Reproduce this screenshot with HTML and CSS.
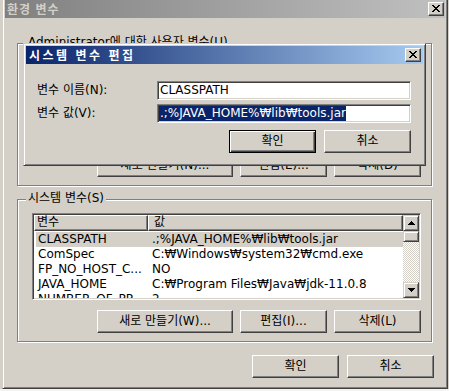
FILE: index.html
```html
<!DOCTYPE html>
<html lang="ko">
<head>
<meta charset="utf-8">
<title>환경 변수</title>
<link rel="stylesheet" href="styles.css">
</head>
<body>
<div class="win">
  <div class="caption inactive">
    <span class="cap-text cap-outer">환경 변수</span>
    <span class="cap-btn"><svg width="8" height="7" viewBox="0 0 8 7" shape-rendering="crispEdges"><path d="M0 0h2v1H0zM6 0h2v1H6zM1 1h2v1H1zM5 1h2v1H5zM2 2h4v1H2zM3 3h2v1H3zM2 4h4v1H2zM1 5h2v1H1zM5 5h2v1H5zM0 6h2v1H0zM6 6h2v1H6z"/></svg></span>
  </div>

  <div class="group">
    <span class="legend">Administrator에 대한 사용자 변수(U)</span>
    <div class="list">
      <div class="list-main"></div>
    </div>
    <div class="btn-row">
      <button class="btn btn-wide">새로 만들기(N)...</button>
      <button class="btn">편집(E)...</button>
      <button class="btn">삭제(D)</button>
    </div>
  </div>

  <div class="group group-sys">
    <span class="legend">시스템 변수(S)</span>
    <div class="list">
      <div class="list-main">
        <div class="list-head"><span class="hcell c1">변수</span><span class="hcell c2">값</span></div>
        <div class="rows">
          <div class="row sel"><span class="c1">CLASSPATH</span><span class="c2">.;%JAVA_HOME%₩lib₩tools.jar</span></div>
          <div class="row"><span class="c1">ComSpec</span><span class="c2">C:₩Windows₩system32₩cmd.exe</span></div>
          <div class="row"><span class="c1">FP_NO_HOST_C...</span><span class="c2">NO</span></div>
          <div class="row"><span class="c1">JAVA_HOME</span><span class="c2">C:₩Program Files₩Java₩jdk-11.0.8</span></div>
          <div class="row"><span class="c1">NUMBER_OF_PR...</span><span class="c2">2</span></div>
        </div>
      </div>
      <div class="vscroll">
        <div class="sb-btn"><svg width="7" height="4" viewBox="0 0 7 4" shape-rendering="crispEdges"><path d="M3 0h1v1h1v1h1v1h1v1H0V3h1V2h1V1h1z"/></svg></div>
        <div class="sb-thumb"></div>
        <div class="sb-track"></div>
        <div class="sb-btn"><svg width="7" height="4" viewBox="0 0 7 4" shape-rendering="crispEdges"><path d="M0 0h7v1H6v1H5v1H4v1H3V3H2V2H1V1H0z"/></svg></div>
      </div>
    </div>
    <div class="btn-row">
      <button class="btn btn-wide">새로 만들기(W)...</button>
      <button class="btn">편집(I)...</button>
      <button class="btn">삭제(L)</button>
    </div>
  </div>

  <div class="footer">
    <button class="btn">확인</button>
    <button class="btn">취소</button>
  </div>
</div>

<div class="dlg">
  <div class="caption active">
    <span class="cap-text cap-inner">시스템 변수 편집</span>
    <span class="cap-btn"><svg width="8" height="7" viewBox="0 0 8 7" shape-rendering="crispEdges"><path d="M0 0h2v1H0zM6 0h2v1H6zM1 1h2v1H1zM5 1h2v1H5zM2 2h4v1H2zM3 3h2v1H3zM2 4h4v1H2zM1 5h2v1H1zM5 5h2v1H5zM0 6h2v1H0zM6 6h2v1H6z"/></svg></span>
  </div>
  <div class="dlg-body">
    <div class="fields">
      <span class="flabel">변수 이름(N):</span>
      <div class="edit"><span>CLASSPATH</span></div>
      <span class="flabel">변수 값(V):</span>
      <div class="edit"><span class="selected">.;%JAVA_HOME%₩lib₩tools.jar</span></div>
    </div>
    <div class="dlg-buttons">
      <button class="btn default">확인</button>
      <button class="btn">취소</button>
    </div>
  </div>
</div>
</body>
</html>
```

FILE: styles.css
```css
* { box-sizing: border-box; }

html { background: #fff; }

body {
  margin: 0;
  width: 449px;
  height: 391px;
  overflow: hidden;
  display: flow-root;
  background: linear-gradient(to bottom, #d4d0c8 389px, #f4f4f4 389px);
  font-family: "DejaVu Sans", "Noto Sans CJK KR", sans-serif;
  font-size: 12px;
  color: #000;
}

/* ---------- outer window ---------- */
.win {
  width: 446px;
  height: 392px;
  margin: -3px 0 0 2px;
  border: 1px solid;
  border-color: #d4d0c8 #404040 #404040 #d4d0c8;
  box-shadow: inset 1px 1px #fff, inset -1px -1px #808080;
  padding: 2px;
  background: #d4d0c8;
  display: flex;
  flex-direction: column;
}

.caption {
  height: 18px;
  flex: none;
  display: flex;
  align-items: center;
  padding: 0 2px 0 2px;
}
.caption.inactive {
  background: linear-gradient(to right, #808080, #c0c0c0);
  color: #d4d0c8;
  padding-right: 1px;
}
.caption.active {
  background: linear-gradient(to right, #0a246a, #a6caf0);
  color: #fff;
  padding-left: 3px;
}
.cap-text {
  flex: 1;
  font-family: "Noto Sans CJK KR", sans-serif;
  font-weight: bold;
  font-size: 12px;
  line-height: 16px;
  white-space: nowrap;
}
.cap-outer { letter-spacing: 1px; }
.cap-inner { letter-spacing: 2.5px; }

.cap-btn {
  width: 16px;
  height: 14px;
  flex: none;
  background: #d4d0c8;
  border: 1px solid;
  border-color: #fff #404040 #404040 #fff;
  box-shadow: inset -1px -1px #808080;
  display: flex;
  justify-content: center;
  align-items: flex-start;
  padding-top: 2px;
}
.cap-btn svg { display: block; fill: #000; }

/* ---------- group boxes ---------- */
.group {
  flex: none;
  width: 415px;
  height: 143px;
  margin: 25px 0 0 12px;
  border: 1px solid #808080;
  box-shadow: inset 1px 1px #fff, 1px 1px #fff;
  display: flex;
  flex-direction: column;
}
.group-sys { margin-top: 13px; }

.legend {
  align-self: flex-start;
  margin: -9px 0 0 8px;
  padding: 0 2px;
  line-height: 15px;
  height: 15px;
  background: #d4d0c8;
  white-space: nowrap;
}

/* ---------- list view ---------- */
.list {
  flex: none;
  width: 389px;
  height: 87px;
  margin: 7px 0 0 14px;
  border: 1px solid;
  border-color: #808080 #fff #fff #808080;
  box-shadow: inset 1px 1px #404040, inset -1px -1px #d4d0c8;
  padding: 1px;
  background: #fff;
  display: flex;
  overflow: hidden;
}
.list-main {
  flex: 1;
  min-width: 0;
  overflow: hidden;
  display: flex;
  flex-direction: column;
}
.list-head {
  flex: none;
  height: 16px;
  display: flex;
}
.hcell {
  height: 16px;
  background: #d4d0c8;
  border: 1px solid;
  border-color: #fff #404040 #404040 #fff;
  box-shadow: inset -1px -1px #808080;
  line-height: 13px;
  padding-left: 2px;
  white-space: nowrap;
}
.hcell.c1 { width: 114px; flex: none; }
.hcell.c2 { flex: 1; padding-left: 5px; }

.rows {
  padding-top: 1px;
  display: flex;
  flex-direction: column;
}
.row {
  flex: none;
  height: 15px;
  line-height: 15px;
  margin-left: 2px;
  display: flex;
  white-space: nowrap;
}
.row.sel { background: #d4d0c8; }
.row .c1 { width: 112px; flex: none; padding-left: 2px; overflow: hidden; }
.row .c2 { flex: 1; padding-left: 4px; overflow: hidden; }

.vscroll {
  flex: none;
  width: 16px;
  display: flex;
  flex-direction: column;
}
.sb-btn, .sb-thumb {
  flex: none;
  background: #d4d0c8;
  border: 1px solid;
  border-color: #d4d0c8 #404040 #404040 #d4d0c8;
  box-shadow: inset 1px 1px #fff, inset -1px -1px #808080;
}
.sb-btn {
  height: 16px;
  display: flex;
  justify-content: center;
  align-items: center;
}
.sb-btn svg { display: block; fill: #000; }
.sb-thumb { height: 11px; }
.sb-track {
  flex: 1;
  background-color: #fff;
  background-image: conic-gradient(#d4d0c8 25%, #fff 0 50%, #d4d0c8 0 75%, #fff 0);
  background-size: 2px 2px;
}

/* ---------- buttons ---------- */
.btn-row {
  flex: none;
  width: 389px;
  margin: 10px 0 0 14px;
  display: flex;
  justify-content: flex-end;
  gap: 7px;
}
.btn {
  flex: none;
  width: 87px;
  height: 23px;
  padding: 0;
  background: #d4d0c8;
  border: 1px solid;
  border-color: #fff #404040 #404040 #fff;
  box-shadow: inset -1px -1px #808080;
  font: inherit;
  line-height: 19px;
  color: #000;
  white-space: nowrap;
}
.btn-wide { width: 136px; }
.btn.default {
  border-color: #000;
  box-shadow: inset 1px 1px #fff, inset -1px -1px #404040, inset -2px -2px #808080;
}

.footer {
  flex: none;
  margin: 13px 11px 0 0;
  display: flex;
  justify-content: flex-end;
  gap: 8px;
}

/* ---------- edit dialog ---------- */
.dlg {
  position: absolute;
  left: 23px;
  top: 43px;
  width: 403px;
  height: 123px;
  background: #d4d0c8;
  border: 1px solid;
  border-color: #d4d0c8 #404040 #404040 #d4d0c8;
  box-shadow: inset 1px 1px #fff, inset -1px -1px #808080;
  padding: 2px;
  display: flex;
  flex-direction: column;
}
.dlg-body {
  padding: 17px 12px 0 11px;
}
.fields {
  display: grid;
  grid-template-columns: 120px 254px;
  grid-auto-rows: 19px;
  row-gap: 4px;
  align-items: center;
}
.flabel { white-space: nowrap; line-height: 15px; }
.edit {
  height: 19px;
  background: #fff;
  border: 1px solid;
  border-color: #808080 #fff #fff #808080;
  box-shadow: inset 1px 1px #404040, inset -1px -1px #d4d0c8;
  padding: 1px 1px 1px 2px;
  display: flex;
  align-items: center;
  white-space: nowrap;
  overflow: hidden;
  line-height: 15px;
}
.edit .selected {
  background: #0a246a;
  color: #fff;
  margin-left: -1px;
  padding-left: 1px;
}
.dlg-buttons {
  margin-top: 7px;
  display: flex;
  justify-content: flex-end;
  gap: 8px;
}
```
